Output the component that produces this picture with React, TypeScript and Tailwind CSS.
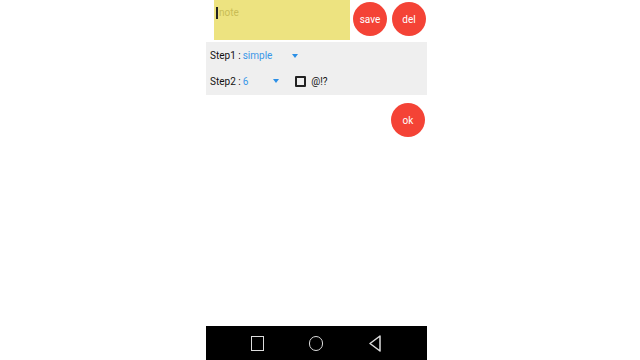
import React from "react";

export default function App() {
  const font = { fontFamily: "Roboto, 'Noto Sans', sans-serif" };
  return (
    <div className="w-[640px] h-[360px] bg-white overflow-hidden" style={font}>
      <div className="ml-[206px] w-[221px] h-full flex flex-col">
        <div className="flex items-start h-[40px]">
          <div className="ml-[8px] w-[136px] h-[40px] bg-[#ede380] relative flex items-start pt-[7px] pl-[2px]">
            <div className="w-[2px] h-[12px] bg-[#222] mt-[0px]" />
            <span className="text-[10px] leading-[12px] text-[#c9bd55] ml-[1px]">note</span>
          </div>
          <div className="ml-[3px] mt-[2px] w-[34px] h-[34px] rounded-full bg-[#f44336] flex items-center justify-center text-white text-[10px]">save</div>
          <div className="ml-[5px] mt-[2px] w-[34px] h-[34px] rounded-full bg-[#f44336] flex items-center justify-center text-white text-[10px]">del</div>
        </div>
        <div className="mt-[2px] h-[53px] bg-[#efefef] flex flex-col">
          <div className="h-[25px] flex items-center pt-[2px] pl-[4px] text-[10px]">
            <span className="text-[#111]">Step1 :</span>
            <span className="ml-[2px] text-[#3a97e8]">simple</span>
            <span className="ml-[20px] w-0 h-0 border-l-[3px] border-r-[3px] border-t-[4px] border-l-transparent border-r-transparent border-t-[#2b8fe6]" />
          </div>
          <div className="h-[28px] flex items-center pl-[4px] text-[10px]">
            <span className="text-[#111]">Step2 :</span>
            <span className="ml-[2px] text-[#3a97e8]">6</span>
            <span className="ml-[25px] w-0 h-0 border-l-[3px] border-r-[3px] border-t-[4px] border-l-transparent border-r-transparent border-t-[#2b8fe6]" />
            <span className="ml-[16px] w-[11px] h-[11px] border-2 border-[#222] rounded-[1px]" />
            <span className="ml-[5px] text-[#111]">@!?</span>
          </div>
        </div>
        <div className="flex justify-end pr-[2px] mt-[8px]">
          <div className="w-[34px] h-[34px] rounded-full bg-[#f44336] flex items-center justify-center text-white text-[10px]">ok</div>
        </div>
        <div className="flex-1" />
        <div className="h-[34px] bg-black flex items-center">
          <div className="ml-[45px] w-[13px] h-[15px] border-[1.5px] border-[#ddd]" />
          <div className="ml-[45px] w-[14px] h-[15px] rounded-full border-[1.5px] border-[#ddd]" />
          <svg className="ml-[46px]" width="12" height="17" viewBox="0 0 12 17">
            <path d="M11 1 L1 8.5 L11 16 Z" fill="none" stroke="#ddd" strokeWidth="1.5" strokeLinejoin="round" />
          </svg>
        </div>
      </div>
    </div>
  );
}
